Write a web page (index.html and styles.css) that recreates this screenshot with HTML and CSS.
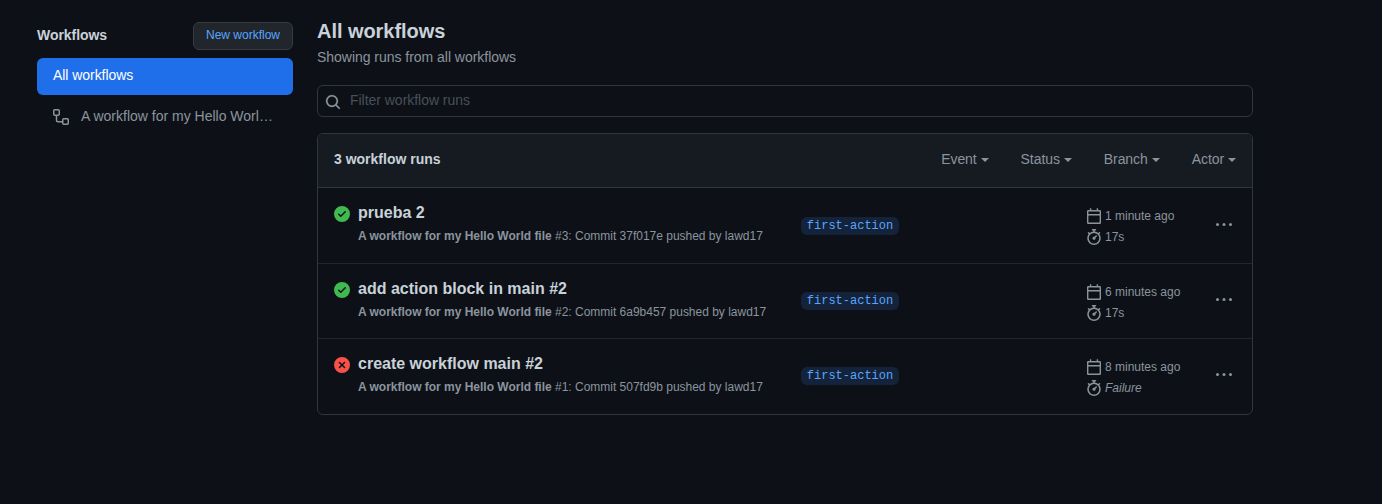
FILE: index.html
```html
<!DOCTYPE html>
<html lang="en">
<head>
<meta charset="utf-8">
<title>Workflow runs</title>
<link rel="stylesheet" href="styles.css">
</head>
<body>
<svg class="sprite" aria-hidden="true">
  <symbol id="flow" viewBox="0 0 16 16"><path fill="none" stroke="currentColor" stroke-width="1.5" d="M1.75.75h3.5a1 1 0 0 1 1 1v3.5a1 1 0 0 1-1 1h-3.5a1 1 0 0 1-1-1v-3.5a1 1 0 0 1 1-1zM10.75 9.75h3.5a1 1 0 0 1 1 1v3.5a1 1 0 0 1-1 1h-3.5a1 1 0 0 1-1-1v-3.5a1 1 0 0 1 1-1zM3.5 6.5v4.75a1.5 1.5 0 0 0 1.5 1.5H9.5"/></symbol>
  <symbol id="search" viewBox="0 0 16 16"><path stroke="currentColor" stroke-width=".2" fill-rule="evenodd" d="M11.5 7a4.499 4.499 0 11-8.998 0A4.499 4.499 0 0111.5 7zm-.82 4.74a6 6 0 111.06-1.06l3.04 3.04a.75.75 0 11-1.06 1.06l-3.04-3.04z"/></symbol>
  <symbol id="ok" viewBox="0 0 16 16"><path fill-rule="evenodd" d="M8 16A8 8 0 108 0a8 8 0 000 16zm3.78-9.72a.75.75 0 00-1.06-1.06L6.75 9.19 5.28 7.72a.75.75 0 00-1.06 1.06l2 2a.75.75 0 001.06 0l4.5-4.5z"/></symbol>
  <symbol id="fail" viewBox="0 0 16 16"><path fill-rule="evenodd" d="M2.343 13.657A8 8 0 1113.657 2.343 8 8 0 012.343 13.657zM6.03 4.97a.75.75 0 00-1.06 1.06L6.94 8 4.97 9.97a.75.75 0 101.06 1.06L8 9.06l1.97 1.97a.75.75 0 101.06-1.06L9.06 8l1.97-1.97a.75.75 0 10-1.06-1.06L8 6.94 6.03 4.97z"/></symbol>
  <symbol id="calendar" viewBox="0 0 16 16"><path fill="none" stroke="currentColor" stroke-width="1.4" d="M2.2 2.7h11.6a.5.5 0 0 1 .5.5v11.6a.5.5 0 0 1-.5.5H2.2a.5.5 0 0 1-.5-.5V3.2a.5.5 0 0 1 .5-.5zM2 6.8h12M4.6 .3v2.4M11.4 .3v2.4"/></symbol>
  <symbol id="watch" viewBox="0 0 16 16"><path fill-rule="evenodd" d="M5.75.75A.75.75 0 016.5 0h3a.75.75 0 010 1.5h-.75v1l-.001.041a6.718 6.718 0 013.464 1.435l.007-.006.75-.75a.75.75 0 111.06 1.06l-.75.75-.006.007a6.75 6.75 0 11-10.548 0L2.72 5.03l-.75-.75a.75.75 0 011.06-1.06l.75.75.007.006A6.718 6.718 0 017.25 2.541a.756.756 0 010-.041v-1H6.5a.75.75 0 01-.75-.75zM8 14.5A5.25 5.25 0 108 4a5.25 5.25 0 000 10.5zm.389-6.7l1.33-1.33a.75.75 0 111.061 1.06L9.45 8.861A1.502 1.502 0 018 10.75a1.5 1.5 0 11.389-2.95z"/></symbol>
  <symbol id="dots" viewBox="0 0 16 16"><circle cx="1.5" cy="7.5" r="1.5"/><circle cx="8" cy="7.5" r="1.5"/><circle cx="14.5" cy="7.5" r="1.5"/></symbol>
</svg>
<div class="layout">
  <aside class="sidebar">
    <div class="side-head"><h2 class="side-title">Workflows</h2><button class="new-btn">New workflow</button></div>
    <nav>
      <a class="nav-item selected">All workflows</a>
      <a class="nav-item"><svg class="icon"><use href="#flow"/></svg><span class="nav-label">A workflow for my Hello Worl…</span></a>
    </nav>
  </aside>
  <main class="main">
    <h1 class="title">All workflows</h1>
    <p class="subtitle">Showing runs from all workflows</p>
    <label class="filter"><svg class="icon"><use href="#search"/></svg><input class="filter-input" placeholder="Filter workflow runs"></label>
    <section class="box">
      <header class="box-head">
        <strong class="count">3 workflow runs</strong>
        <div class="menus"><span class="menu">Event</span><span class="menu">Status</span><span class="menu">Branch</span><span class="menu">Actor</span></div>
      </header>
      <article class="run">
        <svg class="icon status ok"><use href="#ok"/></svg>
        <div class="info"><h3 class="name">prueba 2</h3><p class="detail"><b>A workflow for my Hello World file</b> #3: Commit 37f017e pushed by lawd17</p></div>
        <div class="branch-cell"><span class="branch">first-action</span></div>
        <div class="meta"><div class="meta-line"><svg class="icon"><use href="#calendar"/></svg><span>1 minute ago</span></div><div class="meta-line"><svg class="icon"><use href="#watch"/></svg><span>17s</span></div></div>
        <svg class="icon more"><use href="#dots"/></svg>
      </article>
      <article class="run">
        <svg class="icon status ok"><use href="#ok"/></svg>
        <div class="info"><h3 class="name">add action block in main #2</h3><p class="detail"><b>A workflow for my Hello World file</b> #2: Commit 6a9b457 pushed by lawd17</p></div>
        <div class="branch-cell"><span class="branch">first-action</span></div>
        <div class="meta"><div class="meta-line"><svg class="icon"><use href="#calendar"/></svg><span>6 minutes ago</span></div><div class="meta-line"><svg class="icon"><use href="#watch"/></svg><span>17s</span></div></div>
        <svg class="icon more"><use href="#dots"/></svg>
      </article>
      <article class="run">
        <svg class="icon status fail"><use href="#fail"/></svg>
        <div class="info"><h3 class="name">create workflow main #2</h3><p class="detail"><b>A workflow for my Hello World file</b> #1: Commit 507fd9b pushed by lawd17</p></div>
        <div class="branch-cell"><span class="branch">first-action</span></div>
        <div class="meta"><div class="meta-line"><svg class="icon"><use href="#calendar"/></svg><span>8 minutes ago</span></div><div class="meta-line"><svg class="icon"><use href="#watch"/></svg><em>Failure</em></div></div>
        <svg class="icon more"><use href="#dots"/></svg>
      </article>
    </section>
  </main>
</div>
</body>
</html>
```
FILE: styles.css
```css
* { box-sizing: border-box; }
body { margin: 0; min-height: 504px; background: #0d1117; color: #c9d1d9; font: 14px/21px "Liberation Sans", Arial, sans-serif; }
h1, h2, h3, p { margin: 0; }
.sprite { display: none; }
.icon { width: 16px; height: 16px; flex: none; fill: currentColor; color: #8b949e; }
.layout { display: flex; gap: 24px; padding: 16px 129px 0 37px; }
.sidebar { width: 256px; padding-top: 6px; }
.side-head { display: flex; justify-content: space-between; height: 36px; }
.side-title { font-size: 14px; line-height: 26px; letter-spacing: -.05px; }
.new-btn { width: 100px; height: 28px; padding: 0 0 2px; border: 1px solid #363b42; border-radius: 6px; background: #21262d; color: #58a6ff; font: 12px/20px "Liberation Sans", Arial, sans-serif; }
.nav-item { display: flex; align-items: center; gap: 12px; height: 37px; padding: 0 16px 2px; margin-bottom: 4px; border-radius: 6px; color: #8b949e; }
.nav-item .icon { margin-top: 1px; }
.nav-label { white-space: nowrap; }
.selected { background: #1f6feb; color: #fff; letter-spacing: -.05px; }
.main { flex: 1; min-width: 0; }
.title { font-size: 20px; line-height: 30px; letter-spacing: -.05px; }
.subtitle { color: #8b949e; line-height: 22px; letter-spacing: -.03px; }
.filter { display: flex; align-items: center; gap: 9px; height: 32px; margin: 17px 0 16px; padding: 0 7px; border: 1px solid #30363d; border-radius: 6px; }
.filter .icon { margin-top: 2px; }
.filter-input { flex: 1; padding: 0 0 2px; border: 0; background: none; color: #c9d1d9; font: inherit; letter-spacing: -.03px; }
.filter-input::placeholder { color: #484f58; }
.box { border: 1px solid #30363d; border-radius: 6px; overflow: hidden; }
.box-head { display: flex; justify-content: space-between; align-items: center; height: 54px; padding: 0 16px 2px; background: #161b22; border-bottom: 1px solid #30363d; }
.menus { display: flex; gap: 32px; color: #8b949e; letter-spacing: -.08px; }
.menu { display: flex; align-items: center; gap: 4px; }
.menu::after { content: ""; border: 4px solid transparent; border-top-color: currentColor; border-bottom: 0; margin-top: 1px; }
.run { display: grid; grid-template-columns: 16px 443px 293px 130px 16px; height: 75px; padding: 13px 16px 0; }
.run + .run { border-top: 1px solid #21262d; }
.run:last-child { height: 76px; }
.status { margin-top: 5px; }
.ok { color: #3fb950; }
.fail { color: #f85149; }
.info { padding-left: 8px; }
.name { font-size: 16px; line-height: 24px; }
.detail { margin-top: 2px; color: #8b949e; font-size: 12px; line-height: 18px; white-space: nowrap; letter-spacing: -.01px; }
.branch-cell { padding: 16px 0 0 8px; }
.run + .run .branch-cell { padding-top: 15px; }
.branch { display: block; width: 98px; height: 18px; border-radius: 6px; background: #14233a; color: #58a6ff; font: 12px/18px "Liberation Mono", monospace; text-align: center; }
.meta { padding-top: 5px; color: #8b949e; font-size: 12px; }
.meta-line { display: flex; align-items: center; gap: 3px; height: 21px; }
.meta-line .icon { margin-top: -1px; }
.more { margin-top: 16px; }
.run + .run .more { margin-top: 15px; }
```
